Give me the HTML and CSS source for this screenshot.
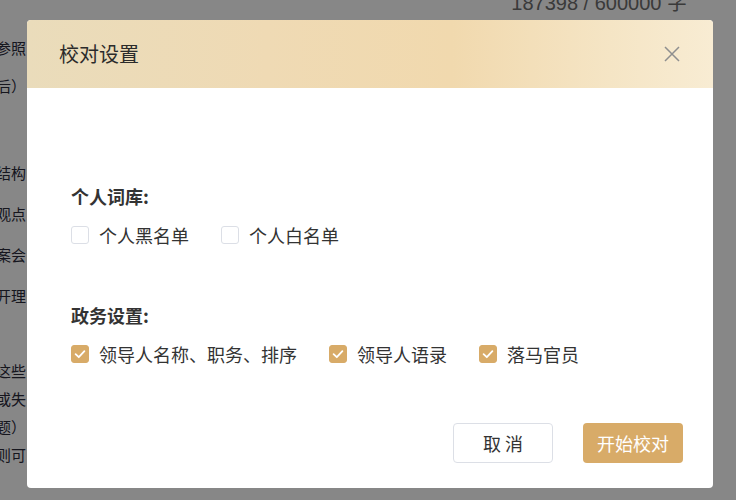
FILE: index.html
```html
<!DOCTYPE html>
<html lang="zh-CN">
<head>
<meta charset="utf-8">
<title>校对设置</title>
<link rel="stylesheet" href="styles.css">
</head>
<body>
<div class="page">
  <div class="counter">187398 / 600000 字</div>
  <div class="doc">
    <div class="para para-a">
      <div class="line"><span>标准参照</span></div>
      <div class="line"><span>（修改后）</span></div>
    </div>
    <div class="para para-b">
      <div class="line"><span>文章结构</span></div>
      <div class="line"><span>主要观点</span></div>
      <div class="line"><span>相关方案会</span></div>
      <div class="line"><span>组织开理</span></div>
    </div>
    <div class="para para-c">
      <div class="line"><span>对于这些</span></div>
      <div class="line"><span>遗漏或失</span></div>
      <div class="line"><span>（问题）</span></div>
      <div class="line"><span>规则可</span></div>
    </div>
  </div>
</div>

<div class="overlay">
  <div class="dialog">
    <div class="dialog-header">
      <span class="dialog-title">校对设置</span>
      <svg class="close" width="16" height="16" viewBox="0 0 16 16" aria-label="关闭">
        <path d="M1 1 L15 15 M15 1 L1 15" stroke="#8f8f8f" stroke-width="1.5" fill="none"/>
      </svg>
    </div>
    <div class="dialog-body">
      <div class="group-title">个人词库:</div>
      <div class="options">
        <label class="option"><span class="box"></span><span class="label">个人黑名单</span></label>
        <label class="option"><span class="box"></span><span class="label">个人白名单</span></label>
      </div>
      <div class="group-title second">政务设置:</div>
      <div class="options">
        <label class="option"><span class="box checked"><svg width="18" height="18" viewBox="0 0 18 18"><path d="M4.6 9.2 L7.8 12.2 L13.4 6.2" stroke="#fff" stroke-width="1.8" fill="none" stroke-linecap="round" stroke-linejoin="round"/></svg></span><span class="label">领导人名称、职务、排序</span></label>
        <label class="option"><span class="box checked"><svg width="18" height="18" viewBox="0 0 18 18"><path d="M4.6 9.2 L7.8 12.2 L13.4 6.2" stroke="#fff" stroke-width="1.8" fill="none" stroke-linecap="round" stroke-linejoin="round"/></svg></span><span class="label">领导人语录</span></label>
        <label class="option"><span class="box checked"><svg width="18" height="18" viewBox="0 0 18 18"><path d="M4.6 9.2 L7.8 12.2 L13.4 6.2" stroke="#fff" stroke-width="1.8" fill="none" stroke-linecap="round" stroke-linejoin="round"/></svg></span><span class="label">落马官员</span></label>
      </div>
    </div>
    <div class="dialog-footer">
      <button class="btn btn-cancel">取 消</button>
      <button class="btn btn-primary">开始校对</button>
    </div>
  </div>
</div>
</body>
</html>
```

FILE: styles.css
```css
* { box-sizing: border-box; }
html, body { margin: 0; padding: 0; }
body {
  width: 736px;
  height: 500px;
  overflow: hidden;
  background: #ffffff;
  font-family: "Noto Sans CJK SC", "Noto Sans", sans-serif;
  position: relative;
}
.page {
  height: 500px;
  display: flex;
  flex-direction: column;
}
.counter {
  align-self: flex-end;
  margin-top: -7px;
  margin-right: 49px;
  font-family: "Liberation Sans", "Noto Sans CJK SC", sans-serif;
  font-size: 20px;
  line-height: 20px;
  color: #6e6e6e;
  white-space: nowrap;
}
.doc {
  display: flex;
  flex-direction: column;
  font-family: "Liberation Serif", "Noto Sans CJK SC", serif;
  font-size: 15px;
  color: #2a2a3a;
}
.para-a { margin-top: 17px; }
.para-a .line { height: 38px; line-height: 38px; }
.para-b { margin-top: 48px; }
.para-b .line { height: 41px; line-height: 41px; }
.para-c { margin-top: 40px; }
.para-c .line { height: 28px; line-height: 28px; }
.line {
  width: 26px;
  display: flex;
  justify-content: flex-end;
  overflow: hidden;
  white-space: nowrap;
}
.line span { flex: none; }

.overlay {
  position: absolute;
  inset: 0;
  background: rgba(0, 0, 0, 0.47);
  padding: 20px 23px 12px 27px;
}
.dialog {
  width: 686px;
  height: 468px;
  background: #fff;
  border-radius: 4px;
  overflow: hidden;
  display: flex;
  flex-direction: column;
}
.dialog-header {
  height: 68px;
  flex: none;
  padding: 0 33px 0 32px;
  display: flex;
  align-items: center;
  justify-content: space-between;
  background: linear-gradient(90deg, #eadcbb 0%, #efdab4 35%, #f1d9ae 62%, #f5e5c5 85%, #f8ecd3 100%);
}
.dialog-title {
  font-size: 20px;
  line-height: 24px;
  color: #2b2b2b;
}
.close { display: block; }

.dialog-body {
  padding: 96px 44px 0 44px;
  display: flex;
  flex-direction: column;
}
.group-title {
  font-size: 18px;
  line-height: 24px;
  font-weight: 700;
  color: #333;
}
.group-title.second { margin-top: 56px; }
.options {
  margin-top: 15px;
  display: flex;
  gap: 32px;
  height: 24px;
  align-items: center;
}
.option {
  display: flex;
  align-items: center;
}
.box {
  width: 18px;
  height: 18px;
  border: 1px solid #dcdfe6;
  border-radius: 3px;
  background: #fff;
  flex: none;
  display: flex;
}
.box.checked {
  background: #d8ab68;
  border-color: #d8ab68;
}
.box svg { margin: -1px; display: block; }
.label {
  margin-left: 10px;
  font-size: 18px;
  line-height: 24px;
  color: #333;
}

.dialog-footer {
  margin-top: auto;
  padding: 0 30px 25px 0;
  display: flex;
  justify-content: flex-end;
  gap: 30px;
}
.btn {
  width: 100px;
  height: 40px;
  border-radius: 4px;
  font-family: "Noto Sans CJK SC", sans-serif;
  font-size: 18px;
  line-height: 24px;
  padding: 0;
}
.btn-cancel {
  background: #fff;
  border: 1px solid #dcdfe6;
  color: #333;
}
.btn-primary {
  background: #d8ab68;
  border: none;
  color: #fff;
}
```
